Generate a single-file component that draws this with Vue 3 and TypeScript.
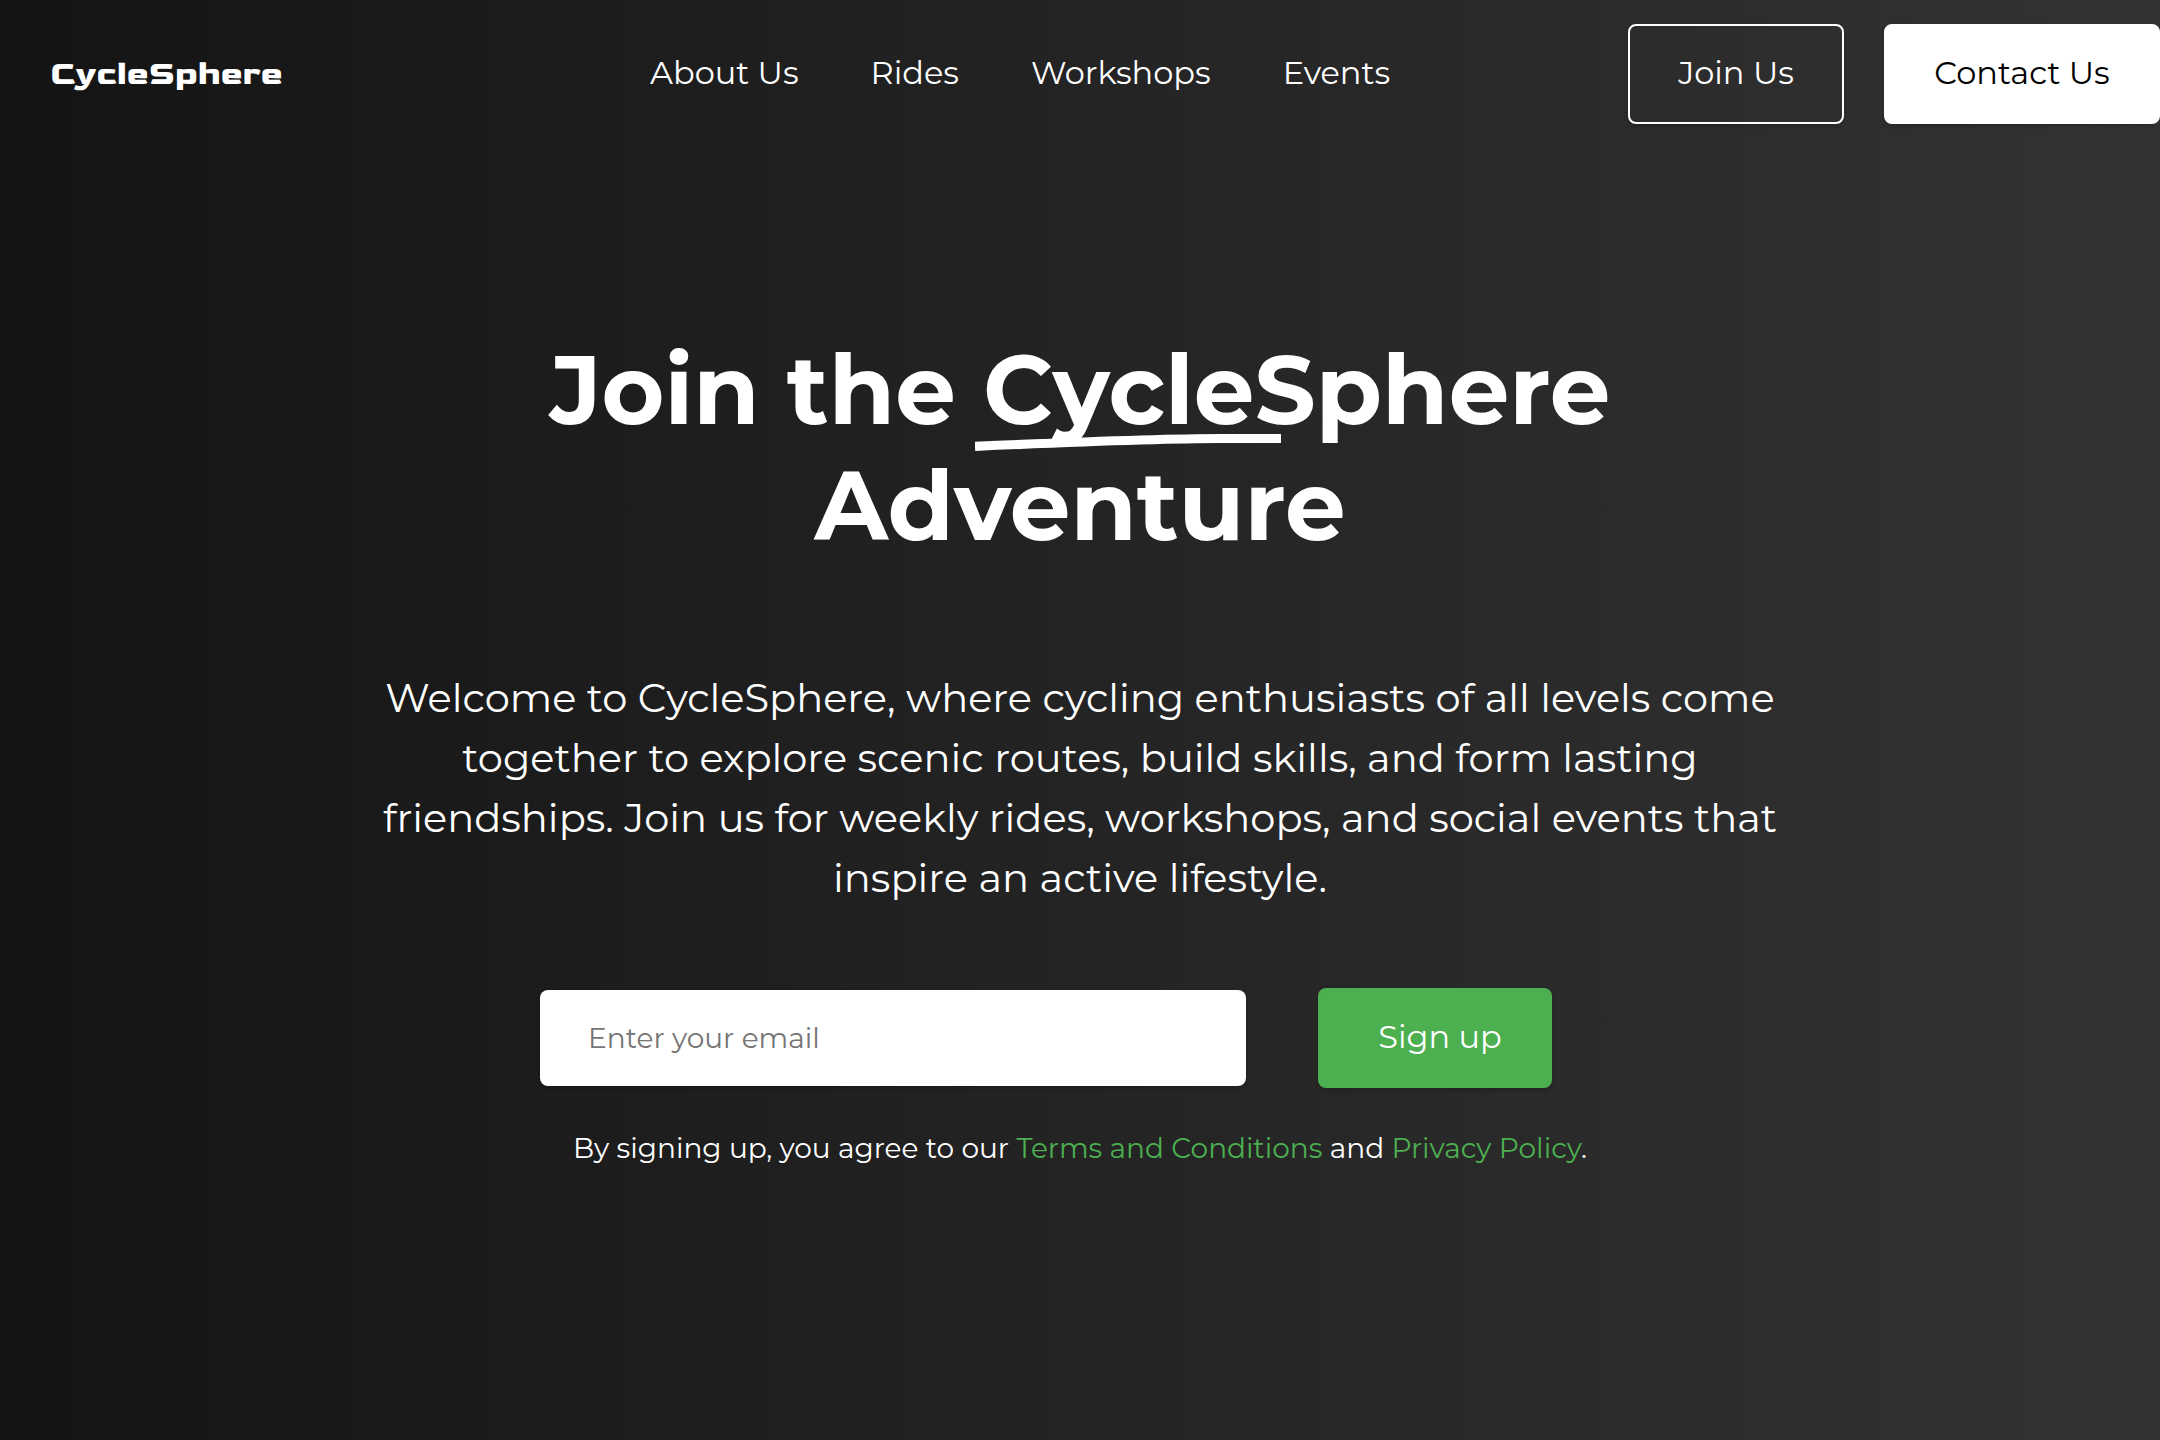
<script setup lang="ts">
import { ref } from 'vue'

interface NavLink {
  label: string
  href: string
}

const links: NavLink[] = [
  { label: 'About Us', href: '#about' },
  { label: 'Rides', href: '#rides' },
  { label: 'Workshops', href: '#workshops' },
  { label: 'Events', href: '#events' },
]

const email = ref('')
</script>

<template>
  <div class="page">
    <header class="header">
      <a class="logo" href="#">CycleSphere</a>
      <nav class="nav" aria-label="Main">
        <a v-for="link in links" :key="link.href" class="nav-link" :href="link.href">{{ link.label }}</a>
      </nav>
      <div class="actions">
        <button class="btn btn-outline" type="button">Join Us</button>
        <button class="btn btn-light" type="button">Contact Us</button>
      </div>
    </header>

    <main class="hero">
      <h1 class="title">
        Join the
        <span class="marked">CycleSphere<svg class="stroke" viewBox="0 0 306 20" fill="none" aria-hidden="true">
            <path d="M0 14.3C100 10 200 6.500 245 6.500H306" stroke="#fff" stroke-width="9.2" />
          </svg></span>
        Adventure
      </h1>
      <p class="intro">
        Welcome to CycleSphere, where cycling enthusiasts of all levels come together to explore scenic
        routes, build skills, and form lasting friendships. Join us for weekly rides, workshops, and social
        events that inspire an active lifestyle.
      </p>
      <form class="signup" @submit.prevent>
        <input v-model="email" class="email" type="email" placeholder="Enter your email" aria-label="Email address" />
        <button class="btn btn-green" type="submit">Sign up</button>
      </form>
      <p class="terms">
        By signing up, you agree to our <a href="#terms">Terms and Conditions</a> and
        <a href="#privacy">Privacy Policy</a>.
      </p>
    </main>
  </div>
</template>

<style>
body {
  margin: 0;
  background: #141414;
}
</style>

<style scoped>
.page {
  box-sizing: border-box;
  min-height: 100vh;
  background: linear-gradient(to right, #141414, #333);
  color: #fff;
  font-family: Montserrat, Inter, sans-serif;
}

.header {
  display: grid;
  grid-template-columns: 30% 1fr auto;
  align-items: center;
  padding: 24px 0;
}

.logo {
  padding-left: 50px;
  color: #fff;
  font-family: Goldman, "DejaVu Sans", sans-serif;
  font-size: 33px;
  font-weight: 700;
  text-decoration: none;
}

.nav {
  display: flex;
  gap: 72px;
  padding: 0 0 4px 2px;
}

.nav-link {
  color: #fff;
  font-size: 32px;
  text-decoration: none;
  white-space: nowrap;
}

.actions {
  display: flex;
  gap: 40px;
}

.btn {
  box-sizing: border-box;
  height: 100px;
  padding: 0 48px 4px;
  border: 2px solid #fff;
  border-radius: 8px;
  box-shadow: 0 2px 4px rgba(0, 0, 0, 0.2);
  font-family: inherit;
  font-size: 32px;
  white-space: nowrap;
  cursor: pointer;
}

.btn-outline {
  min-width: 216px;
  background: transparent;
  color: #fff;
}

.btn-light {
  min-width: 276px;
  background: #fff;
  color: #000;
}

.btn-green {
  min-width: 234px;
  padding-left: 58px;
  border-color: #4caf50;
  background: #4caf50;
  color: #fff;
}

.hero {
  display: flex;
  flex-direction: column;
  align-items: center;
  padding: 184px 24px 96px;
  text-align: center;
}

.title {
  max-width: 1200px;
  margin: 0 0 104px;
  font-size: 96px;
  font-weight: 700;
  line-height: 116px;
}

.marked {
  position: relative;
}

.stroke {
  position: absolute;
  left: -8px;
  bottom: -4px;
  width: 306px;
  height: 20px;
}

.intro {
  max-width: 1440px;
  margin: 0 0 80px;
  font-size: 40px;
  line-height: 60px;
}

.signup {
  display: flex;
  align-items: center;
  gap: 72px;
  width: 100%;
  max-width: 1080px;
  margin-bottom: 40px;
}

.email {
  box-sizing: border-box;
  flex: 0 1 706px;
  min-width: 0;
  height: 96px;
  padding: 0 48px;
  border: 0;
  border-radius: 8px;
  box-shadow: 0 2px 4px rgba(0, 0, 0, 0.2);
  background: #fff;
  color: #000;
  font-family: inherit;
  font-size: 28px;
}

.email::placeholder {
  color: #757575;
}

.terms {
  margin: 0;
  font-size: 28px;
  line-height: 40px;
}

.terms a {
  color: #4caf50;
  text-decoration: none;
}
</style>
